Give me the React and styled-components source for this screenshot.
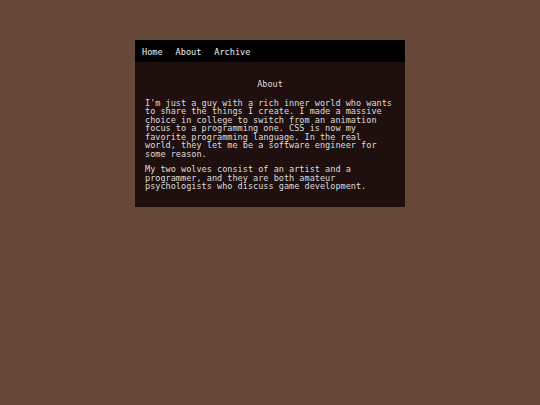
import styled, { createGlobalStyle } from "styled-components"

const GlobalStyle = createGlobalStyle`
    html, body {
        margin: 0;
        padding: 0;
        background-color: #654837;
        font-family: "DejaVu Sans Mono", "Liberation Mono", monospace;
    }
`

const Page = styled.div`
    width: 540px;
    height: 405px;
    display: flex;
    justify-content: center;
    align-items: flex-start;
    padding-top: 40px;
    box-sizing: border-box;
`

const Card = styled.div`
    width: 270px;
    background-color: #1f0f0f;
    color: #dcdcdc;
    font-size: 8.55px;
`

const Nav = styled.nav`
    height: 22px;
    background-color: #000;
    display: flex;
    align-items: center;
    gap: 13px;
    padding: 1px 7px 0;
    box-sizing: border-box;
`

const NavLink = styled.a`
    color: #f0f0f0;
    text-decoration: none;
    font-size: 8.55px;
`

const Content = styled.main`
    padding: 18px 10px 16px 10px;
`

const Heading = styled.h2`
    margin: 0 0 10px;
    text-align: center;
    font-size: 8.55px;
    font-weight: normal;
    line-height: 8.5px;
`

const Paragraph = styled.p`
    margin: 0 0 7px;
    line-height: 8.5px;

    &:last-child {
        margin-bottom: 0;
    }
`

const App = () => {
  return (
    <>
      <GlobalStyle />
      <Page>
        <Card>
          <Nav>
            <NavLink href="#">Home</NavLink>
            <NavLink href="#">About</NavLink>
            <NavLink href="#">Archive</NavLink>
          </Nav>
          <Content>
            <Heading>About</Heading>
            <Paragraph>
              I'm just a guy with a rich inner world who wants to share the things I create. I made a massive choice in college to switch from an animation focus to a programming one. CSS is now my favorite programming language. In the real world, they let me be a software engineer for some reason.
            </Paragraph>
            <Paragraph>
              My two wolves consist of an artist and a programmer, and they are both amateur psychologists who discuss game development.
            </Paragraph>
          </Content>
        </Card>
      </Page>
    </>
  )
}

export default App
